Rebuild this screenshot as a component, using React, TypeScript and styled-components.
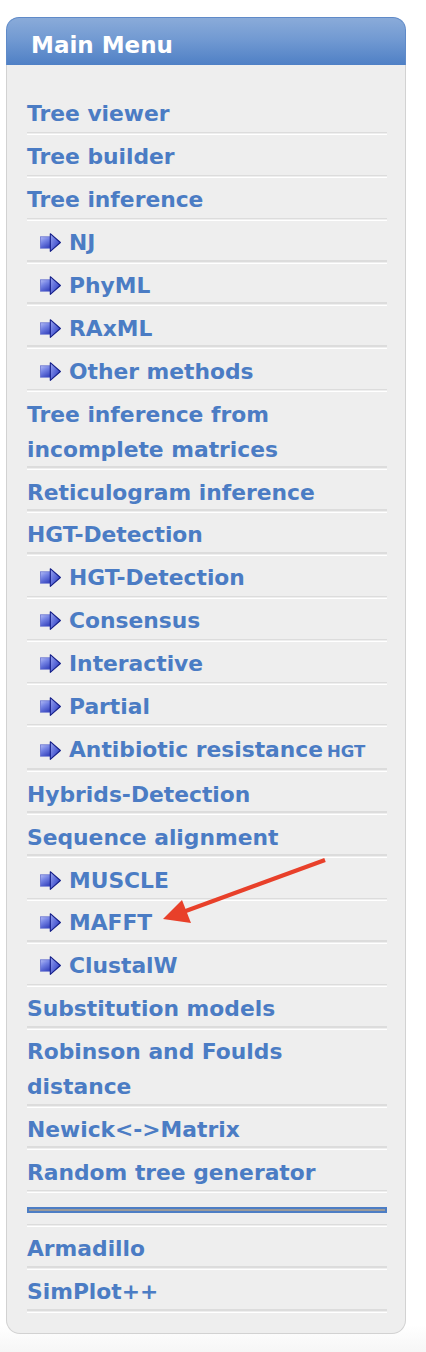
import React from "react";
import styled, { createGlobalStyle } from "styled-components";

const GlobalStyle = createGlobalStyle`
  html, body {
    margin: 0;
    padding: 0;
  }
  body {
    background: linear-gradient(to bottom, #ffffff 0, #ffffff 1325px, #f6f6f6 1352px);
    min-height: 1352px;
    font-family: "DejaVu Sans", Verdana, sans-serif;
  }
`;

const Page = styled.div`
  position: relative;
  width: 426px;
  min-height: 1352px;
  padding: 17px 0 0 6px;
  box-sizing: border-box;
`;

const Panel = styled.div`
  width: 400px;
  display: flex;
  flex-direction: column;
`;

const Header = styled.div`
  height: 48px;
  box-sizing: border-box;
  border-radius: 13px 13px 0 0;
  border: 1px solid #5f8ac8;
  border-bottom: none;
  background: linear-gradient(to bottom, #8aabd9 0%, #729ad2 45%, #4f80c5 100%);
  color: #ffffff;
  font-weight: bold;
  font-size: 23px;
  line-height: 40px;
  padding: 6px 0 0 24px;
  display: flex;
  align-items: center;
`;

const Body = styled.div`
  background: #eeeeee;
  border: 1.5px solid #d2d2d2;
  border-top: none;
  border-radius: 0 0 14px 14px;
  padding: 27px 18px 20px 20px;
`;

const List = styled.ul`
  list-style: none;
  margin: 0;
  padding: 0;
  display: flex;
  flex-direction: column;
`;

const sep = `linear-gradient(to bottom,
    transparent 0, transparent calc(100% - 3.5px),
    #dcdcdc calc(100% - 3.5px), #dcdcdc calc(100% - 2.3px),
    transparent calc(100% - 2.3px), transparent calc(100% - 1.3px),
    #ffffff calc(100% - 1.3px), #ffffff 100%)`;

const Item = styled.li<{ $sub?: boolean }>`
  display: flex;
  align-items: center;
  gap: 8px;
  padding: 4.4px 0 3.5px ${(p) => (p.$sub ? "13px" : "0")};
  background: ${sep};
  color: #4b7cc4;
  font-weight: bold;
  font-size: 21.8px;
  line-height: 35px;
`;

const DividerItem = styled.li`
  padding: 13.5px 0 14px 0;
  background: ${sep};
`;

const Rule = styled.div`
  height: 2px;
  border: 2px solid #4d7ec5;
  background: #9a9a9a;
`;

const Small = styled.span`
  font-size: 16.5px;
  margin-left: 4px;
`;

const Label = styled.span``;

const Overlay = styled.svg`
  position: absolute;
  left: 155px;
  top: 850px;
  width: 180px;
  height: 80px;
  pointer-events: none;
`;

const BulletArrow: React.FC = () => (
  <svg width="21" height="19" viewBox="0 0 21 19" style={{ flex: "none" }}>
    <defs>
      <linearGradient id="shaftG" x1="0" y1="0" x2="0.6" y2="1">
        <stop offset="0" stopColor="#b4bcf4" />
        <stop offset="0.45" stopColor="#7483e4" />
        <stop offset="1" stopColor="#3a48c0" />
      </linearGradient>
      <linearGradient id="headG" x1="0" y1="0" x2="1" y2="0.8">
        <stop offset="0" stopColor="#9aa6f0" />
        <stop offset="0.6" stopColor="#5564d6" />
        <stop offset="1" stopColor="#2a36b0" />
      </linearGradient>
    </defs>
    <rect x="0.5" y="3.8" width="11" height="11.4" fill="url(#shaftG)" stroke="#5a66cc" strokeWidth="0.7" />
    <path d="M10.3 0.7 L20.4 9.5 L10.3 18.3 Z" fill="url(#headG)" stroke="#141e88" strokeWidth="1.1" strokeLinejoin="round" />
  </svg>
);

type Entry =
  | { kind: "item"; label: string; sub?: boolean; small?: string }
  | { kind: "divider" };

const entries: Entry[] = [
  { kind: "item", label: "Tree viewer" },
  { kind: "item", label: "Tree builder" },
  { kind: "item", label: "Tree inference" },
  { kind: "item", label: "NJ", sub: true },
  { kind: "item", label: "PhyML", sub: true },
  { kind: "item", label: "RAxML", sub: true },
  { kind: "item", label: "Other methods", sub: true },
  { kind: "item", label: "Tree inference from incomplete matrices" },
  { kind: "item", label: "Reticulogram inference" },
  { kind: "item", label: "HGT-Detection" },
  { kind: "item", label: "HGT-Detection", sub: true },
  { kind: "item", label: "Consensus", sub: true },
  { kind: "item", label: "Interactive", sub: true },
  { kind: "item", label: "Partial", sub: true },
  { kind: "item", label: "Antibiotic resistance", sub: true, small: "HGT" },
  { kind: "item", label: "Hybrids-Detection" },
  { kind: "item", label: "Sequence alignment" },
  { kind: "item", label: "MUSCLE", sub: true },
  { kind: "item", label: "MAFFT", sub: true },
  { kind: "item", label: "ClustalW", sub: true },
  { kind: "item", label: "Substitution models" },
  { kind: "item", label: "Robinson and Foulds distance" },
  { kind: "item", label: "Newick<->Matrix" },
  { kind: "item", label: "Random tree generator" },
  { kind: "divider" },
  { kind: "item", label: "Armadillo" },
  { kind: "item", label: "SimPlot++" },
];

const App: React.FC = () => (
  <>
    <GlobalStyle />
    <Page>
      <Panel>
        <Header>Main Menu</Header>
        <Body>
          <List>
            {entries.map((e, i) =>
              e.kind === "divider" ? (
                <DividerItem key={i}>
                  <Rule />
                </DividerItem>
              ) : (
                <Item key={i} $sub={e.sub}>
                  {e.sub && <BulletArrow />}
                  <Label>
                    {e.label}
                    {e.small && <Small>{e.small}</Small>}
                  </Label>
                </Item>
              )
            )}
          </List>
        </Body>
      </Panel>
      <Overlay viewBox="0 0 180 80">
        <line x1="170" y1="10" x2="28" y2="62" stroke="#e8402a" strokeWidth="4.2" strokeLinecap="butt" />
        <path d="M8 69 L27 50 L36 73 Z" fill="#e8402a" />
      </Overlay>
    </Page>
  </>
);

export default App;
